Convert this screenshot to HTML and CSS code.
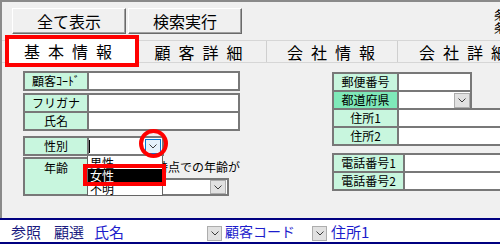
FILE: index.html
```html
<!DOCTYPE html>
<html lang="ja">
<head>
    <meta charset="UTF-8">
    <meta name="viewport" content="width=device-width, initial-scale=1.0">
    <title>顧客検索</title>
    <link rel="stylesheet" href="styles.css">
</head>
<body>
    <div class="window">
        <div class="toolbar">
            <button class="cmd">全て表示</button>
            <button class="cmd">検索実行</button>
            <div class="note">条<br>条</div>
        </div>

        <div class="tabs">
            <div class="tab active">基本情報</div>
            <div class="tab tab-2">顧客詳細</div>
            <div class="tab tab-3">会社情報</div>
            <div class="tab tab-4">会社詳細</div>
        </div>

        <div class="content">
            <div class="left-group">
                <div class="block">
                    <div class="field"><div class="label">顧客ｺｰﾄﾞ</div><div class="input"></div></div>
                </div>
                <div class="block gap-2">
                    <div class="field"><div class="label">フリガナ</div><div class="input wide"></div></div>
                    <div class="field"><div class="label">氏名</div><div class="input wide"></div></div>
                </div>
                <div class="block gap-5">
                    <div class="field short">
                        <div class="label">性別</div>
                        <div class="input combo">
                            <span class="caret"></span>
                            <span class="drop hover"><svg width="8" height="5" viewBox="0 0 8 5"><polyline points="0.5,0.5 4,4 7.5,0.5" fill="none" stroke="#3c3c3c" stroke-width="1"/></svg></span>
                        </div>
                    </div>
                </div>
                <div class="age-row">
                    <div class="field short tall">
                        <div class="label top">年齢</div>
                        <div class="input"></div>
                    </div>
                    <div class="age-side">
                        <div class="age-note">時点での年齢が</div>
                        <div class="age-combo">
                            <span class="drop small"><svg width="8" height="5" viewBox="0 0 8 5"><polyline points="0.5,0.5 4,4 7.5,0.5" fill="none" stroke="#3c3c3c" stroke-width="1"/></svg></span>
                        </div>
                    </div>
                </div>
            </div>

            <div class="right-group">
                <div class="block">
                    <div class="field"><div class="label">郵便番号</div><div class="input narrow"></div></div>
                    <div class="field">
                        <div class="label selected">都道府県</div>
                        <div class="input narrow combo end">
                            <span class="drop"><svg width="8" height="5" viewBox="0 0 8 5"><polyline points="0.5,0.5 4,4 7.5,0.5" fill="none" stroke="#3c3c3c" stroke-width="1"/></svg></span>
                        </div>
                    </div>
                    <div class="field"><div class="label">住所1</div><div class="input"></div></div>
                    <div class="field"><div class="label">住所2</div><div class="input"></div></div>
                </div>
                <div class="block gap-7">
                    <div class="field"><div class="label tel">電話番号1</div><div class="input"></div></div>
                    <div class="field"><div class="label tel">電話番号2</div><div class="input"></div></div>
                </div>
            </div>
        </div>
    </div>

    <div class="bottom">
        <span class="ref">参照</span>
        <span class="ref sel-ref">顧選</span>
        <span class="link name">氏名</span>
        <span class="drop mini push-a"><svg width="8" height="5" viewBox="0 0 8 5"><polyline points="0.5,0.5 4,4 7.5,0.5" fill="none" stroke="#3c3c3c" stroke-width="1"/></svg></span>
        <span class="link code">顧客コード</span>
        <span class="drop mini push-b"><svg width="8" height="5" viewBox="0 0 8 5"><polyline points="0.5,0.5 4,4 7.5,0.5" fill="none" stroke="#3c3c3c" stroke-width="1"/></svg></span>
        <span class="link addr">住所1</span>
    </div>

    <!-- open list of the 性別 combo -->
    <div class="listbox">
        <div class="opt">男性</div>
        <div class="opt sel">女性</div>
        <div class="opt">不明</div>
    </div>

    <!-- red markers -->
    <div class="mark-circle"></div>
    <div class="mark-rect"></div>
</body>
</html>
```

FILE: styles.css
```css
* {
    box-sizing: border-box;
}

html, body {
    margin: 0;
    overflow: hidden;
}

body {
    position: relative;
    width: 500px;
    height: 246px;
    background: #f0f0f0;
    color: #000;
    font-family: "Noto Sans CJK JP", "Noto Sans", sans-serif;
    font-size: 12px;
}

.window {
    height: 218px;
    border-top: 2px solid #8a8a8a;
    border-left: 2px solid #8a8a8a;
    overflow: hidden;
}

.toolbar {
    display: flex;
    align-items: flex-start;
    gap: 2px;
    height: 32px;
    padding: 6px 0 0 10px;
}

.cmd {
    width: 114px;
    height: 26px;
    padding: 0;
    font-family: inherit;
    font-size: 16px;
    line-height: 24px;
    color: #000;
    background: #f0f0f0;
    border: 1px solid;
    border-color: #fff #6a6a6a #6a6a6a #fff;
    box-shadow: inset -1px -1px 0 #a0a0a0;
}

.note {
    margin-left: auto;
    margin-right: -8px;
    width: 14px;
    line-height: 13px;
    white-space: nowrap;
}

.tabs {
    display: flex;
    height: 23px;
    margin-top: 6px;
    border-top: 1px solid #d6d6d6;
    border-bottom: 1px solid #d6d6d6;
    font-size: 16px;
    letter-spacing: 8px;
    white-space: nowrap;
}

.tab {
    display: flex;
    align-items: center;
    justify-content: center;
    flex: none;
}

.tab.active {
    width: 134px;
    height: 32px;
    margin: -6px 0 0 3px;
    border: 4px solid #f00;
    background: #fff;
    position: relative;
    z-index: 1;
}

.tab-2 {
    width: 128px;
    border-right: 1px solid #cfcfcf;
}

.tab-3 {
    width: 131px;
    padding-left: 6px;
    border-right: 1px solid #cfcfcf;
}

.tab-4 {
    justify-content: flex-start;
    padding-left: 21px;
}

.content {
    display: flex;
    margin-top: 8px;
}

.left-group {
    flex: none;
    width: 217px;
    margin-left: 21px;
}

.right-group {
    flex: none;
    width: 200px;
    margin-left: 92px;
    padding-top: 1px;
}

.gap-2 { margin-top: 2px; }
.gap-5 { margin-top: 5px; }
.gap-7 { margin-top: 7px; }

.field {
    display: flex;
    height: 20px;
}

.field + .field {
    margin-top: -2px;
}

.field.short {
    width: 141px;
}

.field.tall {
    height: 39px;
}

.label {
    flex: none;
    width: 66px;
    border: 2px solid #787878;
    background: #c8f6de;
    text-align: center;
    line-height: 16px;
    white-space: nowrap;
}

.right-group .label {
    width: 67px;
}

.right-group .label.tel {
    width: 73px;
}

.label.selected {
    background: #7fe9b9;
}

.label.top {
    padding-top: 1px;
}

.input {
    flex: 1;
    margin-left: -2px;
    border: 2px solid #787878;
    background: #fff;
}

.input.narrow {
    flex: none;
    width: 75px;
}

.combo {
    display: flex;
    align-items: center;
    justify-content: space-between;
    padding-right: 1px;
}

.combo.end {
    justify-content: flex-end;
    padding-right: 0;
}

.caret {
    width: 1px;
    height: 13px;
    background: #000;
}

.drop {
    display: flex;
    align-items: center;
    justify-content: center;
    flex: none;
    width: 16px;
    height: 15px;
    background: #e1e1e1;
    border: 1px solid #adadad;
}

.drop.hover {
    background: #e5f1fb;
    border-color: #0078d7;
}

.drop.small {
    height: 14px;
}

.drop.mini {
    width: 15px;
    align-self: flex-end;
    margin-bottom: 1px;
}

.age-row {
    display: flex;
    margin-top: 1px;
}

.age-side {
    display: flex;
    flex-direction: column;
    margin-left: -1px;
}

.age-note {
    padding: 3px 0 0 4px;
    line-height: 14px;
    white-space: nowrap;
}

.age-combo {
    display: flex;
    align-items: center;
    justify-content: flex-end;
    width: 77px;
    height: 18px;
    margin-top: 4px;
    padding-right: 1px;
    border: 2px solid #787878;
    background: #fff;
}

.bottom {
    display: flex;
    align-items: center;
    height: 26px;
    padding-left: 11px;
    background: #fff;
    border-top: 2px solid #000080;
    border-bottom: 2px solid #000080;
    box-shadow: 0 2px 0 #fff, 0 3px 0 #000080;
    font-size: 15px;
    white-space: nowrap;
}

.ref {
    color: #1c1c80;
}

.sel-ref {
    margin-left: 13px;
}

.link {
    color: #1d1dcc;
}

.name {
    margin-left: 10px;
}

.push-a {
    margin-left: 83px;
}

.code {
    margin-left: 3px;
    font-size: 14px;
}

.push-b {
    margin-left: 17px;
}

.addr {
    margin-left: 4px;
}

.listbox {
    position: absolute;
    left: 87px;
    top: 156px;
    width: 76px;
    height: 40px;
    background: #fff;
    border: 1px solid #646464;
    border-top: none;
    z-index: 2;
}

.opt {
    height: 13px;
    padding-left: 2px;
    line-height: 13px;
}

.opt.sel {
    background: #000;
    color: #fff;
}

.mark-circle {
    position: absolute;
    left: 139px;
    top: 129px;
    width: 29px;
    height: 29px;
    border: 4px solid #f00;
    border-radius: 50%;
    z-index: 3;
}

.mark-rect {
    position: absolute;
    left: 83px;
    top: 164px;
    width: 83px;
    height: 22px;
    border: 4px solid #f00;
    z-index: 3;
}
```
